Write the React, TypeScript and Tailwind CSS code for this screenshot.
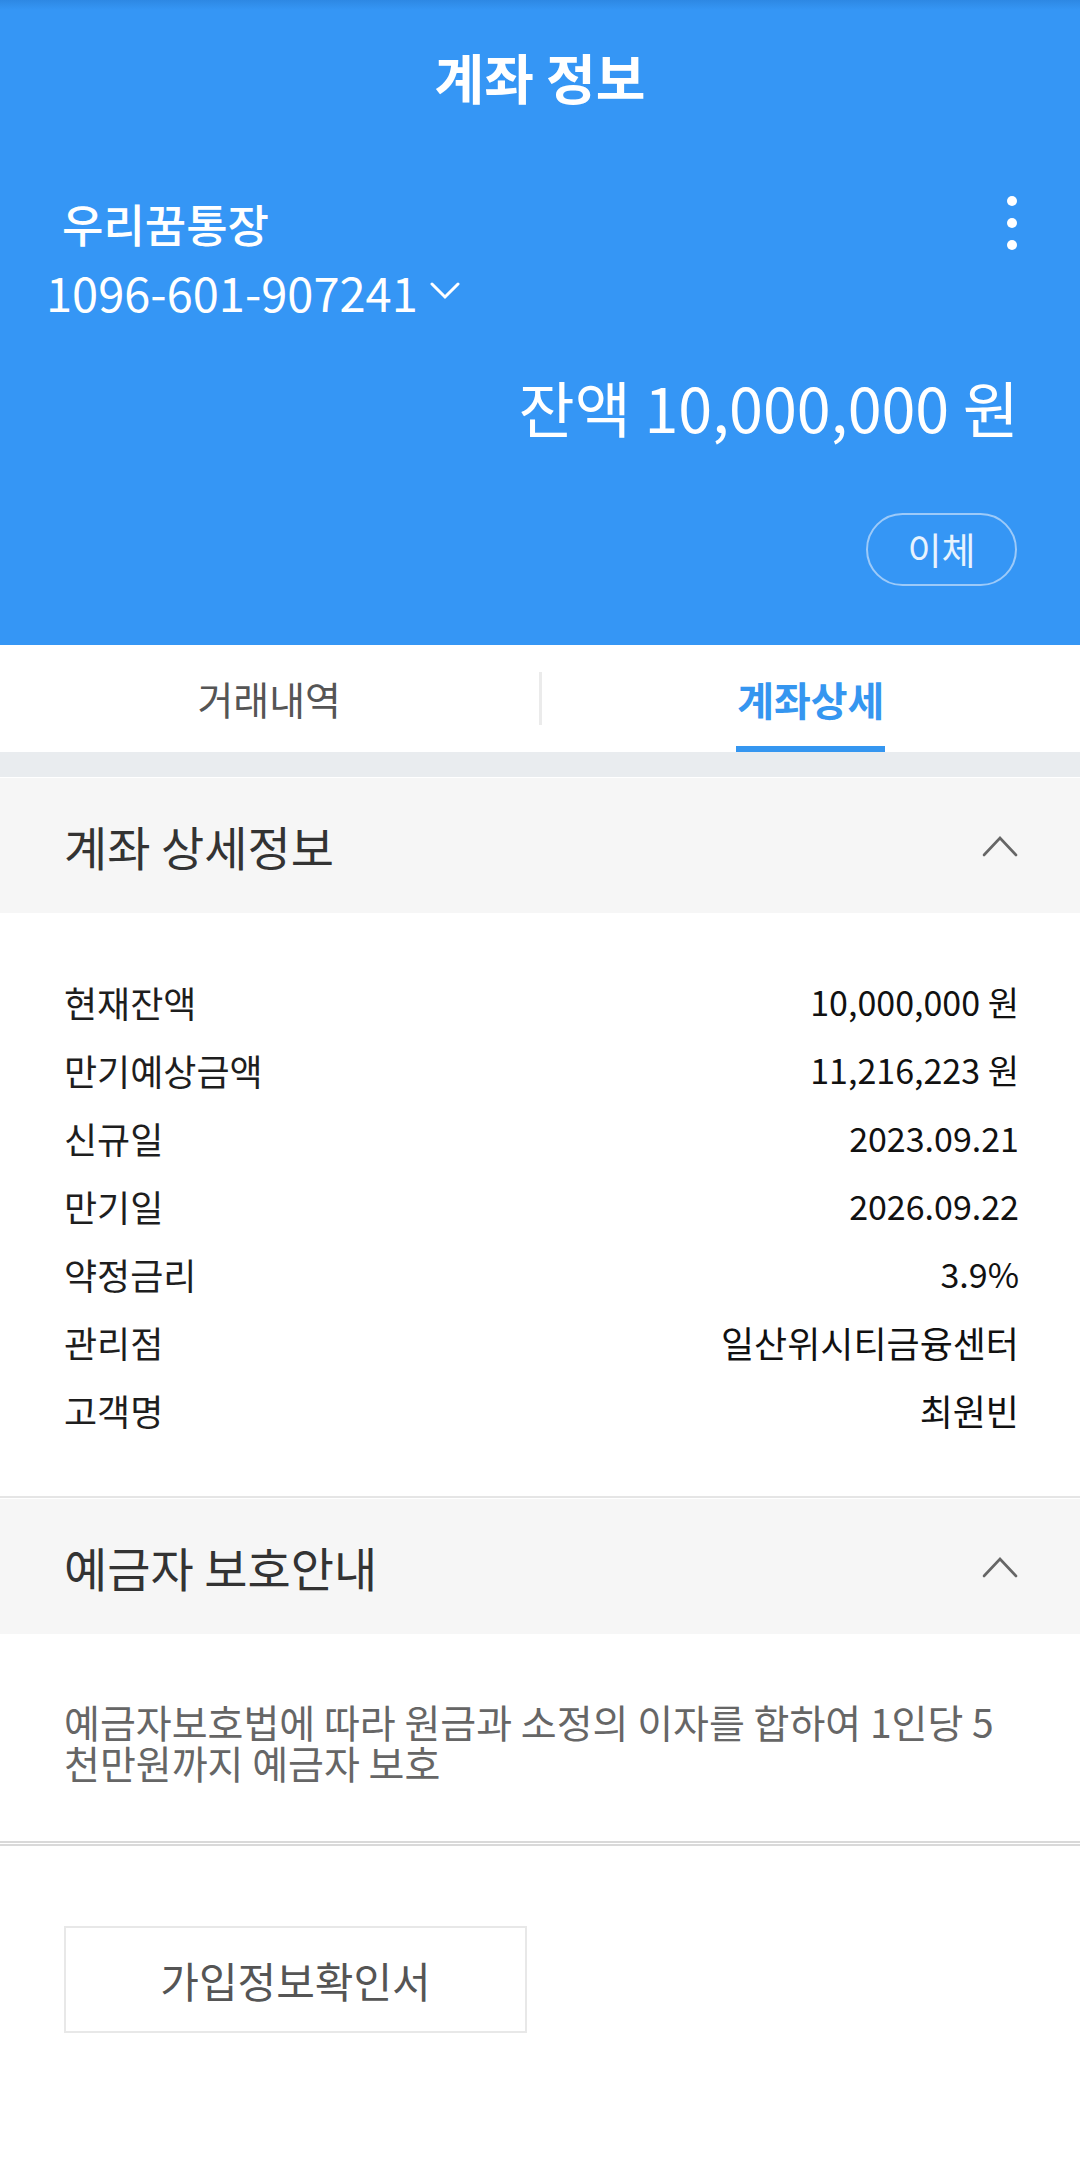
import React from "react";

const FONT = { fontFamily: '"Noto Sans CJK KR", "Noto Sans", sans-serif' };

function ChevronUp() {
  return (
    <svg width="36" height="22" viewBox="0 0 36 22" fill="none">
      <path d="M2 20 L18 3 L34 20" stroke="#666666" strokeWidth="2.6" strokeLinecap="round" strokeLinejoin="miter" />
    </svg>
  );
}

function ChevronDown() {
  return (
    <svg width="30" height="18" viewBox="0 0 30 18" fill="none">
      <path d="M2 2 L15 15 L28 2" stroke="#ffffff" strokeWidth="3" strokeLinecap="round" strokeLinejoin="miter" />
    </svg>
  );
}

const rows: [string, string, boolean][] = [
  ["현재잔액", "10,000,000 원", true],
  ["만기예상금액", "11,216,223 원", true],
  ["신규일", "2023.09.21", true],
  ["만기일", "2026.09.22", true],
  ["약정금리", "3.9%", true],
  ["관리점", "일산위시티금융센터", false],
  ["고객명", "최원빈", false],
];

export default function App() {
  return (
    <div className="w-[1080px] min-h-[2182px] bg-white" style={FONT}>
      {/* Header */}
      <div className="relative h-[645px] bg-[#3596f5] pl-[46px] pr-[61px] flex flex-col text-white">
        <div className="absolute left-0 top-0 h-[10px] w-full bg-gradient-to-b from-[#2a82dc] to-transparent opacity-70" />
        <div className="h-[154px] flex items-center justify-center -mr-[15px]">
          <span className="text-[54px] font-bold leading-none whitespace-nowrap">계좌 정보</span>
        </div>
        <div className="mt-[41px] h-[56px] flex items-center justify-between">
          <span className="ml-[16px] text-[45px] font-medium leading-none whitespace-nowrap">우리꿈통장</span>
          <div className="flex flex-col gap-[12px] items-center w-[10px] mr-[2px]">
            <div className="w-[10px] h-[10px] rounded-full bg-white" />
            <div className="w-[10px] h-[10px] rounded-full bg-white" />
            <div className="w-[10px] h-[10px] rounded-full bg-white" />
          </div>
        </div>
        <div className="mt-[12px] h-[56px] flex items-center">
          <span className="text-[47px] leading-none whitespace-nowrap">1096-601-907241</span>
          <span className="ml-[12px] flex items-center">
            <ChevronDown />
          </span>
        </div>
        <div className="mt-[52px] h-[70px] flex items-center justify-end">
          <span className="text-[61px] leading-none whitespace-nowrap">잔액 10,000,000 원</span>
        </div>
        <div className="mt-[72px] flex justify-end">
          <div className="w-[151px] h-[73px] mr-[2px] rounded-full border-2 border-[#9ccaf9] flex items-center justify-center">
            <span className="text-[37px] leading-none text-[#e8f3fe]">이체</span>
          </div>
        </div>
      </div>

      {/* Tabs */}
      <div className="h-[107px] flex items-stretch bg-white">
        <div className="flex-1 flex items-center justify-center">
          <span className="text-[39px] text-[#555555] leading-none">거래내역</span>
        </div>
        <div className="w-[3px] self-center h-[53px] bg-[#ebebeb]" />
        <div className="flex-1 flex items-center justify-center">
          <div className="relative h-full flex items-center">
            <span className="text-[40px] font-bold text-[#3596f0] leading-none">계좌상세</span>
            <div className="absolute bottom-0 -left-[1px] -right-[1px] h-[6px] bg-[#3596f0]" />
          </div>
        </div>
      </div>
      <div className="h-[26px] bg-[#e9ecef] border-b border-white" />

      {/* Section 1 header */}
      <div className="h-[135px] bg-[#f6f6f6] flex items-center justify-between pl-[64px] pr-[62px]">
        <span className="text-[47px] text-[#333333] leading-none">계좌 상세정보</span>
        <ChevronUp />
      </div>

      {/* Details */}
      <div className="pt-[55px] pb-[52px] pl-[64px] pr-[61px]">
        {rows.map(([k, v, num]) => (
          <div key={k} className="h-[68px] flex items-center justify-between">
            <span className="text-[36px] text-[#1e1e1e] leading-[40px]">{k}</span>
            <span className={num ? "text-[34px] text-[#111111] leading-[40px]" : "text-[36px] text-[#111111] leading-[40px]"}>{v}</span>
          </div>
        ))}
      </div>

      {/* Section 2 header */}
      <div className="h-[2px] bg-[#e5e5e5]" />
      <div className="h-[1px] bg-white" />
      <div className="h-[135px] bg-[#f6f6f6] flex items-center justify-between pl-[64px] pr-[62px]">
        <span className="text-[47px] text-[#333333] leading-none">예금자 보호안내</span>
        <ChevronUp />
      </div>

      {/* Protection text */}
      <div className="pt-[67px] pb-[58px] pl-[64px] pr-[40px]">
        <p className="text-[39px] leading-[41px] text-[#666666]">
          <span className="whitespace-nowrap">예금자보호법에 따라 원금과 소정의 이자를 합하여 1인당 5</span>
          <br />
          <span className="whitespace-nowrap">천만원까지 예금자 보호</span>
        </p>
      </div>
      <div className="h-[2px] bg-[#d9d9d9]" />
      <div className="h-[1px] bg-white" />
      <div className="h-[2px] bg-[#d9d9d9]" />

      {/* Button */}
      <div className="pt-[80px] pl-[64px]">
        <div className="w-[463px] h-[107px] border-2 border-[#e8e8e8] flex items-center justify-center">
          <span className="text-[42px] text-[#555555] leading-none">가입정보확인서</span>
        </div>
      </div>
    </div>
  );
}
